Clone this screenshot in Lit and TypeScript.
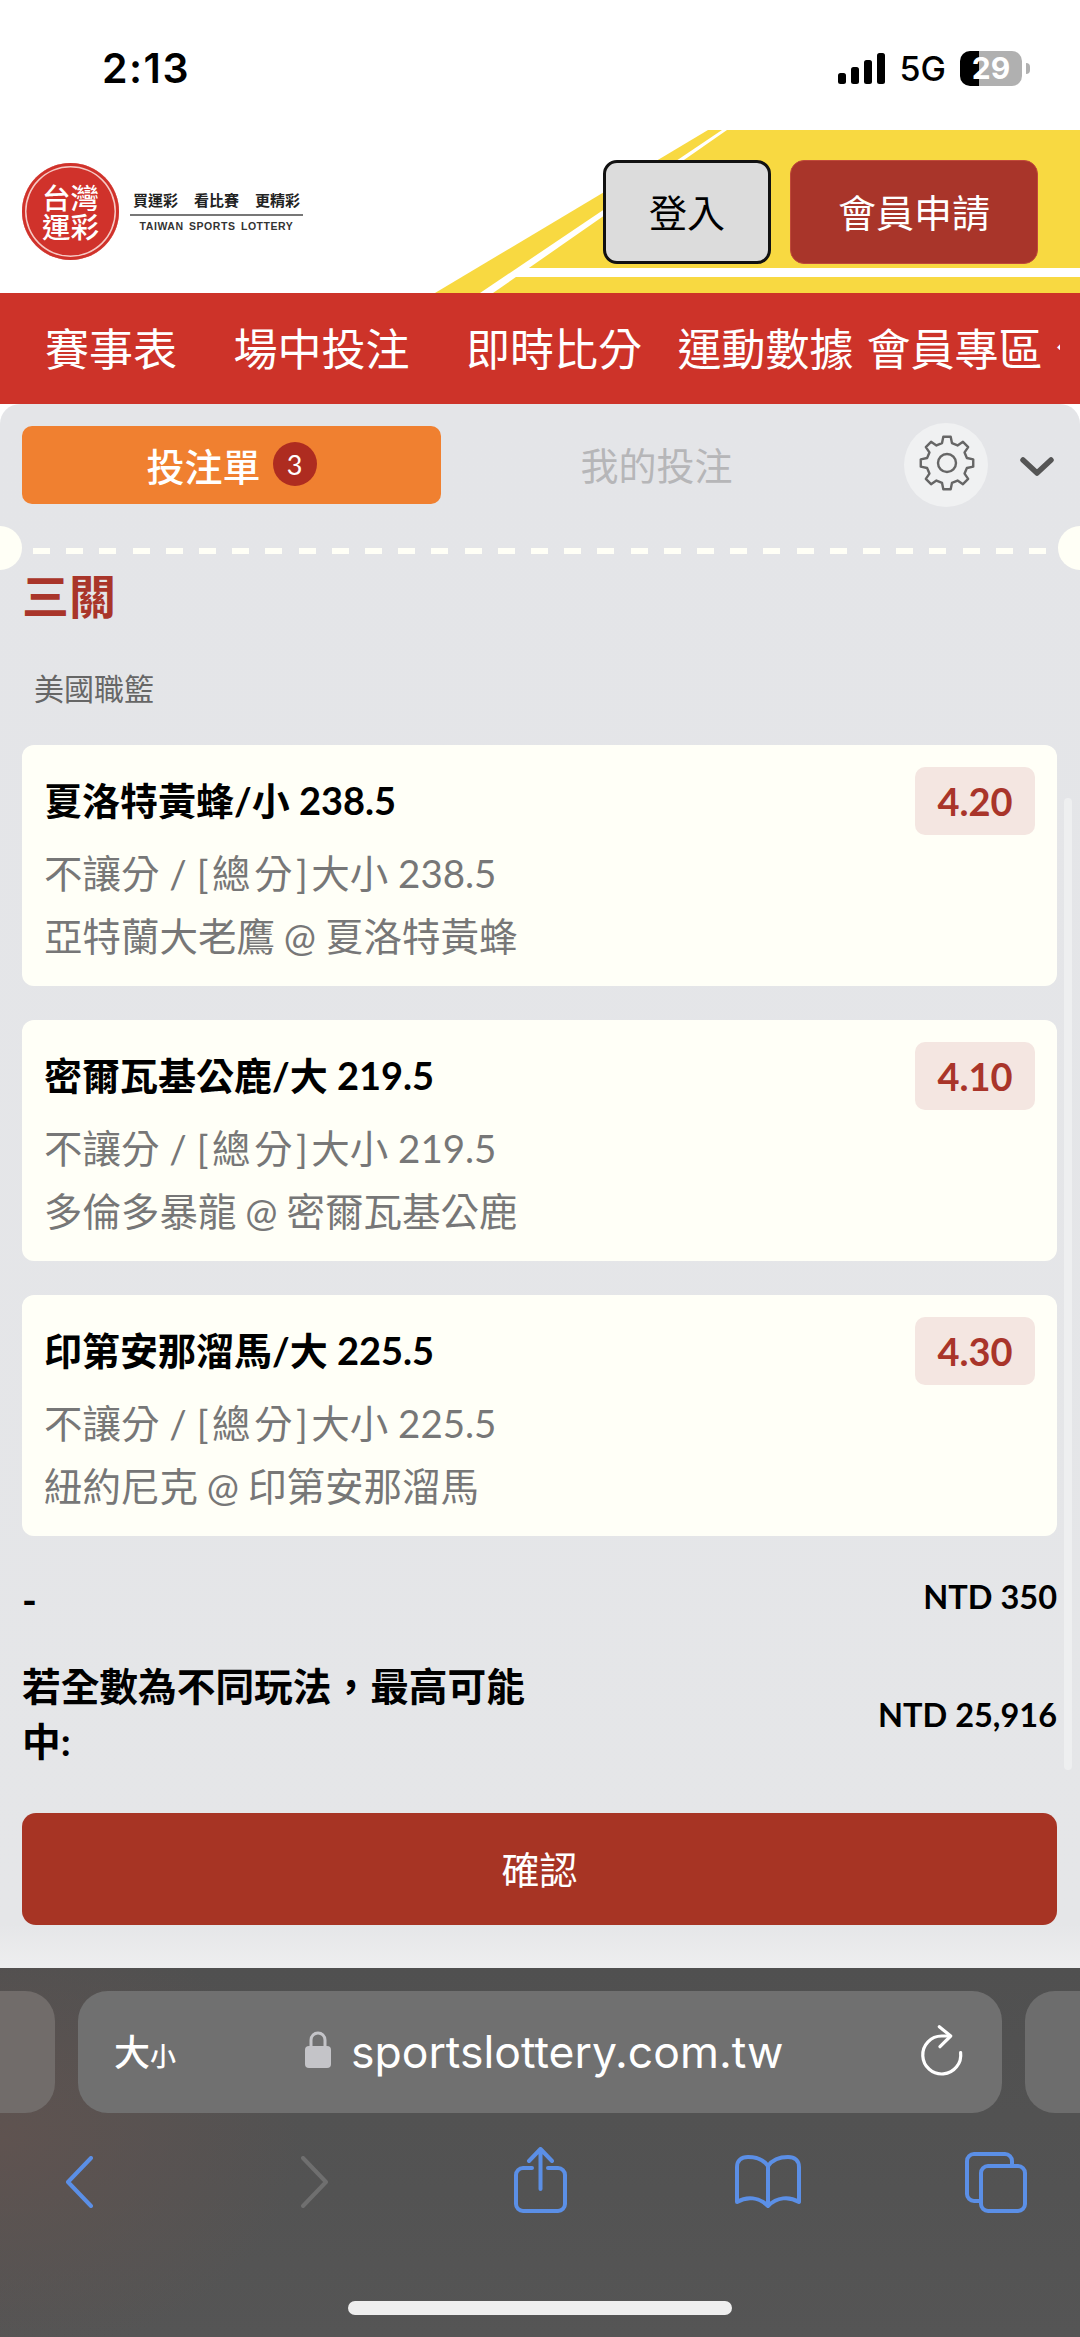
import { LitElement, css, html } from "lit";
import { customElement } from "lit/decorators.js";

interface Bet {
  title: string;
  total: string;
  match: string;
  odds: string;
}

const BETS: Bet[] = [
  { title: "夏洛特黃蜂/小 238.5", total: "238.5", match: "亞特蘭大老鷹 @ 夏洛特黃蜂", odds: "4.20" },
  { title: "密爾瓦基公鹿/大 219.5", total: "219.5", match: "多倫多暴龍 @ 密爾瓦基公鹿", odds: "4.10" },
  { title: "印第安那溜馬/大 225.5", total: "225.5", match: "紐約尼克 @ 印第安那溜馬", odds: "4.30" },
];

// 8 tooth cog outline, centred on 30,30
function gearPath(): string {
  const pt = (r: number, deg: number) => {
    const a = (deg * Math.PI) / 180;
    return `${(30 + r * Math.cos(a)).toFixed(2)} ${(30 + r * Math.sin(a)).toFixed(2)}`;
  };
  const parts: string[] = [];
  for (let i = 0; i < 8; i++) {
    const a = i * 45;
    parts.push(pt(20.5, a - 14), pt(26.5, a - 8), pt(26.5, a + 8), pt(20.5, a + 14));
  }
  return `M${parts.join("L")}Z`;
}

@customElement("app-root")
export class AppRoot extends LitElement {
  static styles = css`
    :host {
      display: flex;
      flex-direction: column;
      width: 1080px;
      height: 2337px;
      overflow: hidden;
      background: #fff;
      font-family: "Lato", "Noto Sans CJK TC", sans-serif;
      color: #000;
    }

    /* status bar */
    .status {
      height: 130px;
      flex: none;
      box-sizing: border-box;
      padding: 46px 50px 0 102px;
      display: flex;
      justify-content: space-between;
      align-items: flex-start;
      font-family: "Inter", sans-serif;
    }
    .time {
      font-size: 41px;
      line-height: 44px;
      font-weight: 600;
      letter-spacing: 1.5px;
    }
    .status-right {
      display: flex;
      align-items: center;
      height: 44px;
    }
    .net {
      font-size: 34px;
      font-weight: 500;
      margin: 0 14px 0 15px;
    }
    .battery {
      position: relative;
      width: 62px;
      height: 35px;
      border-radius: 10px;
      overflow: hidden;
      background: linear-gradient(90deg, #000 30%, #b0b0b0 30%);
      color: #fff;
      font-size: 30px;
      font-weight: 700;
      line-height: 35px;
      text-align: center;
    }
    .tip {
      width: 4px;
      height: 11px;
      margin-left: 4px;
      border-radius: 0 4px 4px 0;
      background: #b0b0b0;
    }

    /* site header */
    .header {
      position: relative;
      height: 163px;
      flex: none;
      box-sizing: border-box;
      padding: 0 42px 0 22px;
      display: flex;
      align-items: center;
      justify-content: space-between;
    }
    .track {
      position: absolute;
      inset: 0;
      width: 1080px;
      height: 163px;
    }
    .logo {
      position: relative;
      display: flex;
      align-items: center;
      gap: 11px;
    }
    .seal {
      width: 97px;
      height: 97px;
      box-sizing: border-box;
      border-radius: 50%;
      background: #d0322b;
      box-shadow: inset 0 0 0 3px #d0322b, inset 0 0 0 4.5px #f6c9c4;
      color: #fff;
      font-family: "Noto Sans CJK TC", sans-serif;
      font-size: 28.5px;
      font-weight: 500;
      line-height: 29px;
      text-align: center;
      padding-top: 19px;
    }
    .seal div {
      white-space: nowrap;
    }
    .tag {
      display: flex;
      flex-direction: column;
      width: 173px;
    }
    .slogan {
      display: flex;
      justify-content: space-between;
      padding: 0 3px 5px;
      font-family: "Noto Sans CJK TC", sans-serif;
      font-size: 15px;
      font-weight: 700;
      line-height: 18px;
      color: #222;
      border-bottom: 2px solid #777;
    }
    .en {
      margin-top: 3px;
      font-family: "Liberation Sans", sans-serif;
      font-size: 10.5px;
      font-weight: 700;
      line-height: 14px;
      letter-spacing: 0.55px;
      word-spacing: 2px;
      text-align: center;
      color: #333;
    }
    .auth {
      position: relative;
      display: flex;
      gap: 19px;
    }
    .btn {
      height: 104px;
      box-sizing: border-box;
      padding-bottom: 2px;
      border-radius: 14px;
      display: flex;
      align-items: center;
      justify-content: center;
      font-family: "Noto Sans CJK TC", sans-serif;
      font-size: 38px;
    }
    .login {
      width: 168px;
      background: #dcdcdc;
      border: 3px solid #111;
    }
    .signup {
      width: 248px;
      background: #a9352a;
      border: 1px solid #c04a3a;
      color: #fff;
    }

    /* main nav */
    .nav {
      height: 111px;
      flex: none;
      background: #cd3329;
      box-sizing: border-box;
      padding: 0 20px 4px 45px;
      display: flex;
      align-items: center;
    }
    .nav-inner {
      display: flex;
      overflow: hidden;
      width: 100%;
      color: #fff;
      font-family: "Noto Sans CJK TC", sans-serif;
      font-size: 44px;
      line-height: 64px;
      white-space: nowrap;
    }
    .nav-inner span {
      flex: none;
      margin-right: 56.5px;
    }
    .nav-inner span.tight {
      margin-right: 35.5px;
    }
    .nav-inner span.snug {
      margin-right: 13px;
    }

    /* bet slip */
    .panel {
      position: relative;
      flex: 1;
      min-height: 0;
      box-sizing: border-box;
      padding: 0 23px 0 22px;
      border-radius: 20px 20px 0 0;
      background: linear-gradient(#e4e5e8 0, #e5e6e8 1520px, #eeeeef 100%);
    }
    .tabs {
      display: flex;
      align-items: center;
      height: 82px;
      margin-top: 20px;
    }
    .tab-on {
      width: 419px;
      height: 78px;
      box-sizing: border-box;
      padding-bottom: 2px;
      border-radius: 10px;
      background: #f08030;
      color: #fff;
      display: flex;
      align-items: center;
      justify-content: center;
      gap: 12px;
      font-family: "Noto Sans CJK TC", sans-serif;
      font-size: 38px;
      font-weight: 500;
    }
    .badge {
      width: 44px;
      height: 44px;
      border-radius: 50%;
      background: #ae2c20;
      font-family: "Lato", sans-serif;
      font-size: 27px;
      font-weight: 400;
      display: flex;
      align-items: center;
      justify-content: center;
    }
    .tab-off {
      width: 431px;
      margin-top: -3px;
      text-align: center;
      color: #b6b6b8;
      font-family: "Noto Sans CJK TC", sans-serif;
      font-size: 38px;
    }
    .gear {
      width: 84px;
      height: 84px;
      flex: none;
      margin-left: 32px;
      border-radius: 50%;
      background: #f0f1f2;
      display: flex;
      align-items: center;
      justify-content: center;
    }
    .gear svg {
      width: 60px;
      height: 60px;
      margin: -5px 0 0 2px;
      fill: none;
      stroke: #666;
      stroke-width: 2.4;
      stroke-linejoin: round;
    }
    .chev {
      width: 34px;
      height: 20px;
      flex: none;
      margin: 3px 0 0 32px;
      fill: none;
      stroke: #555;
      stroke-width: 5.5;
      stroke-linecap: round;
      stroke-linejoin: round;
    }
    .divider {
      position: relative;
      height: 44px;
      margin: 20px -23px 0 -22px;
      display: flex;
      align-items: center;
    }
    .dash {
      width: 1014px;
      height: 6px;
      margin: 6px 0 0 33px;
      background: repeating-linear-gradient(90deg, #fffff6 0 17px, transparent 17px 33.2px);
    }
    .notch {
      position: absolute;
      top: 0;
      width: 22px;
      height: 44px;
      background: #fffff6;
    }
    .notch.l {
      left: 0;
      border-radius: 0 22px 22px 0;
    }
    .notch.r {
      right: 0;
      border-radius: 22px 0 0 22px;
    }
    h2 {
      margin: -4px 0 0;
      font-family: "Noto Sans CJK TC", sans-serif;
      font-size: 47px;
      font-weight: 700;
      line-height: 56px;
      color: #a9352a;
    }
    .league {
      margin: 45px 0 38px 12px;
      font-family: "Noto Sans CJK TC", sans-serif;
      font-size: 30px;
      line-height: 40px;
      color: #666;
    }
    .cards {
      display: flex;
      flex-direction: column;
      gap: 34px;
    }
    .card {
      height: 241px;
      box-sizing: border-box;
      padding: 22px 22px 17px 22px;
      border-radius: 12px;
      background: #fffff7;
    }
    .card-top {
      display: flex;
      justify-content: space-between;
      align-items: center;
      height: 68px;
      margin-bottom: 6.5px;
    }
    .title {
      margin-top: -6px;
      font-size: 38px;
      font-weight: 700;
    }
    .odds {
      width: 120px;
      height: 68px;
      border-radius: 10px;
      background: #f4e6e1;
      color: #a9352a;
      font-size: 38px;
      font-weight: 700;
      display: flex;
      align-items: center;
      justify-content: center;
    }
    .line {
      font-size: 38.5px;
      line-height: 63px;
      color: #777;
      white-space: nowrap;
    }
    .line.match {
      word-spacing: -1px;
    }
    .bracket {
      letter-spacing: 3.5px;
    }
    .sum {
      display: flex;
      justify-content: space-between;
      align-items: center;
      font-weight: 700;
    }
    .sum.stake {
      height: 60px;
      margin-top: 34px;
      font-size: 40px;
    }
    .sum.stake b {
      margin-top: -8px;
    }
    .sum.win {
      margin-top: 29px;
    }
    .sum-label {
      width: 530px;
      font-size: 38.7px;
      line-height: 55px;
    }
    .amount {
      font-size: 32.5px;
      font-weight: 700;
    }
    .confirm {
      height: 112px;
      box-sizing: border-box;
      padding-bottom: 4px;
      margin-top: 44px;
      border-radius: 14px;
      background: #a73424;
      color: #fff;
      font-family: "Noto Sans CJK TC", sans-serif;
      font-size: 38px;
      display: flex;
      align-items: center;
      justify-content: center;
    }
    .scroll {
      position: absolute;
      top: 394px;
      right: 8px;
      width: 8px;
      height: 972px;
      border-radius: 4px;
      background: #eeeff0;
    }

    /* safari chrome */
    .safari {
      height: 369px;
      flex: none;
      background: radial-gradient(300px 220px at 0 170px, #5f5350, transparent), linear-gradient(#505050, #555);
      display: flex;
      flex-direction: column;
    }
    .tabs-row {
      display: grid;
      grid-template-columns: 55px 924px 55px;
      gap: 23px;
      height: 122px;
      margin-top: 23px;
    }
    .peek {
      background: #6d6d6d;
    }
    .peek.l {
      border-radius: 0 30px 30px 0;
      background: #716c6a;
    }
    .peek.r {
      border-radius: 30px 0 0 30px;
    }
    .address {
      position: relative;
      border-radius: 30px;
      background: #707070;
      display: flex;
      align-items: center;
      color: #fff;
      padding-left: 36px;
    }
    .aa {
      font-family: "Noto Sans CJK TC", sans-serif;
      font-size: 36px;
      font-weight: 500;
      line-height: 52px;
      width: 191px;
    }
    .aa small {
      font-size: 26px;
    }
    .lock {
      width: 26px;
      height: 37px;
      margin-right: 20px;
      margin-top: -6px;
    }
    .url {
      font-family: "Inter", sans-serif;
      font-size: 44.5px;
      line-height: 54px;
    }
    .reload {
      position: absolute;
      left: 842px;
      top: 33px;
      width: 44px;
      height: 54px;
      fill: none;
      stroke: #fff;
      stroke-width: 3.2;
      stroke-linecap: round;
      stroke-linejoin: round;
    }
    .toolbar {
      display: flex;
      align-items: center;
      height: 70px;
      margin-top: 34px;
      padding-left: 65px;
    }
    .toolbar svg {
      flex: none;
      fill: none;
      stroke: #5b8fe6;
      stroke-width: 4;
      stroke-linecap: round;
      stroke-linejoin: round;
    }
    .toolbar svg.fwd {
      stroke: #6f6f6f;
      margin-left: 208px;
    }
    .toolbar svg.share {
      margin: -4px 0 0 186px;
    }
    .toolbar svg.book {
      margin-left: 168px;
    }
    .toolbar svg.pages {
      margin-left: 164px;
    }
    .home {
      width: 384px;
      height: 14px;
      margin: 84px auto 0;
      border-radius: 7px;
      background: #eeeeee;
    }
  `;

  render() {
    return html`
      <div class="status">
        <div class="time">2:13</div>
        <div class="status-right">
          <svg width="47" height="31" viewBox="0 0 47 31" fill="#000">
            <rect x="0" y="20" width="8" height="11" rx="2.5"></rect>
            <rect x="13" y="14" width="8" height="17" rx="2.5"></rect>
            <rect x="26" y="7" width="8" height="24" rx="2.5"></rect>
            <rect x="39" y="0" width="8" height="31" rx="2.5"></rect>
          </svg>
          <span class="net">5G</span>
          <div class="battery">29</div>
          <div class="tip"></div>
        </div>
      </div>

      <header class="header">
        <svg class="track" viewBox="0 0 1080 163">
          <polygon points="708,0 1080,0 1080,163 435,163" fill="#f8d941"></polygon>
          <polygon points="722,0 727,0 493,163 480,163" fill="#fff"></polygon>
          <polygon points="528,138 1080,138 1080,147 513,147" fill="#fff"></polygon>
        </svg>
        <div class="logo">
          <div class="seal"><div>台灣</div><div>運彩</div></div>
          <div class="tag">
            <div class="slogan"><span>買運彩</span><span>看比賽</span><span>更精彩</span></div>
            <div class="en">TAIWAN SPORTS LOTTERY</div>
          </div>
        </div>
        <div class="auth">
          <div class="btn login">登入</div>
          <div class="btn signup">會員申請</div>
        </div>
      </header>

      <nav class="nav">
        <div class="nav-inner">
          <span>賽事表</span>
          <span>場中投注</span>
          <span class="tight">即時比分</span>
          <span class="snug">運動數據</span>
          <span class="snug">會員專區</span>
          <span>公告</span>
        </div>
      </nav>

      <main class="panel">
        <div class="tabs">
          <div class="tab-on">投注單<span class="badge">3</span></div>
          <div class="tab-off">我的投注</div>
          <div class="gear">
            <svg viewBox="0 0 60 60"><circle cx="30" cy="30" r="9"></circle><path d=${gearPath()}></path></svg>
          </div>
          <svg class="chev" viewBox="0 0 34 20"><path d="M3 3l14 13L31 3"></path></svg>
        </div>
        <div class="divider">
          <div class="notch l"></div>
          <div class="dash"></div>
          <div class="notch r"></div>
        </div>
        <h2>三關</h2>
        <div class="league">美國職籃</div>
        <div class="cards">
          ${BETS.map(
            (b) => html`
              <article class="card">
                <div class="card-top">
                  <span class="title">${b.title}</span>
                  <span class="odds">${b.odds}</span>
                </div>
                <div class="line">不讓分 / <span class="bracket">[總分]</span>大小 ${b.total}</div>
                <div class="line match">${b.match}</div>
              </article>
            `
          )}
        </div>
        <div class="sum stake"><span>-</span><b class="amount">NTD 350</b></div>
        <div class="sum win">
          <span class="sum-label">若全數為不同玩法，最高可能中:</span>
          <span class="amount">NTD 25,916</span>
        </div>
        <div class="confirm">確認</div>
        <div class="scroll"></div>
      </main>

      <footer class="safari">
        <div class="tabs-row">
          <div class="peek l"></div>
          <div class="address">
            <span class="aa">大<small>小</small></span>
            <svg class="lock" viewBox="0 0 26 37">
              <path d="M6 17V9a7 7 0 0 1 14 0v8" fill="none" stroke="#c4c4c8" stroke-width="3"></path>
              <rect x="0" y="15" width="26" height="22" rx="4" fill="#c4c4c8"></rect>
            </svg>
            <span class="url">sportslottery.com.tw</span>
            <svg class="reload" viewBox="0 0 44 54">
              <path d="M30 12H21.700A19 19 0 1 0 40.600 28.500"></path>
              <path d="M19.300 2.700L30.700 12 20 22.700"></path>
            </svg>
          </div>
          <div class="peek r"></div>
        </div>
        <div class="toolbar">
          <svg width="28" height="52" viewBox="0 0 28 52"><path d="M26 2L3 26l23 24"></path></svg>
          <svg class="fwd" width="27" height="52" viewBox="0 0 27 52"><path d="M2 2l23 24L2 50"></path></svg>
          <svg class="share" width="53" height="67" viewBox="0 0 53 67">
            <path d="M18 21H9a7 7 0 0 0-7 7V57a7 7 0 0 0 7 7H44a7 7 0 0 0 7-7V28a7 7 0 0 0-7-7H34"></path>
            <path d="M26.500 42V3M15 14L26.500 2 38 14"></path>
          </svg>
          <svg class="book" width="66" height="54" viewBox="0 0 66 54">
            <path d="M33 11C28 4 20 2 13 2 6 2 2 6 2 12V47C12 41 24 42 33 51 42 42 54 41 64 47V12C64 6 60 2 53 2 46 2 38 4 33 11ZM33 11V51"></path>
          </svg>
          <svg class="pages" width="62" height="61" viewBox="0 0 62 61">
            <path d="M47 12V9a7 7 0 0 0-7-7H9a7 7 0 0 0-7 7v33a7 7 0 0 0 7 7h6"></path>
            <rect x="16" y="14" width="44" height="45" rx="7"></rect>
          </svg>
        </div>
        <div class="home"></div>
      </footer>
    `;
  }
}

declare global {
  interface HTMLElementTagNameMap {
    "app-root": AppRoot;
  }
}
